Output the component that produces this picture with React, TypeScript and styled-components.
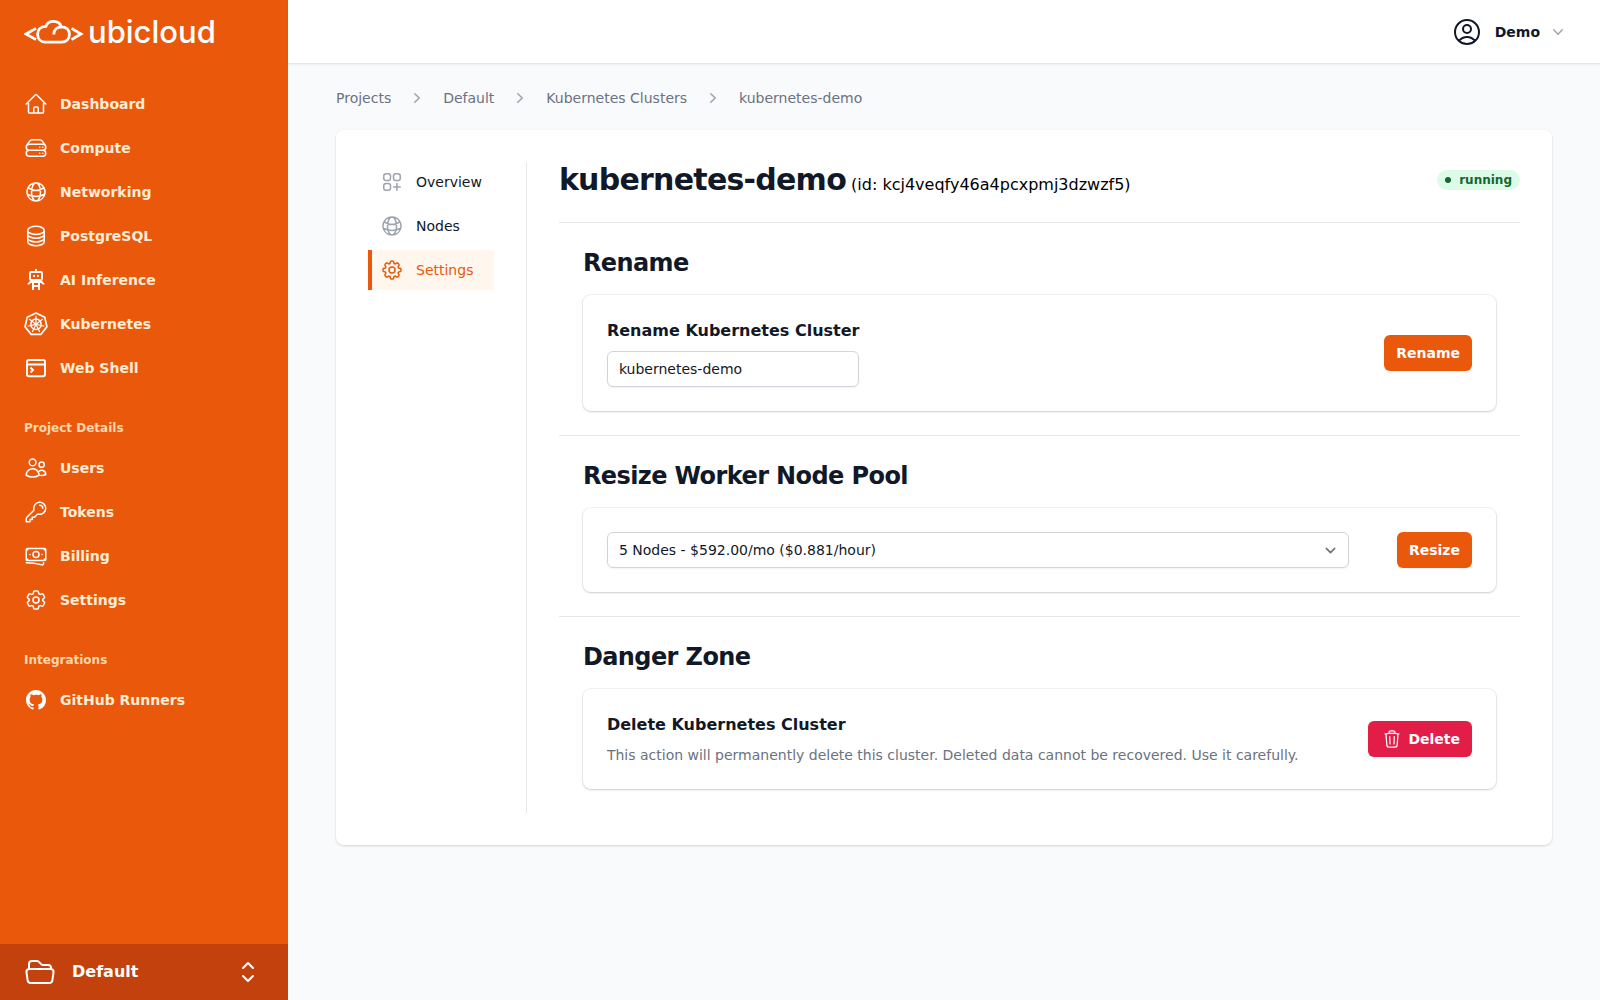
import React from "react";
import styled, { createGlobalStyle } from "styled-components";
import {
  HiOutlineHome, HiOutlineGlobeAlt, HiOutlineCircleStack, HiOutlineUsers, HiOutlineKey,
  HiOutlineBanknotes, HiOutlineCog6Tooth, HiOutlineCog8Tooth, HiOutlineSquaresPlus, HiOutlineFolderOpen,
  HiOutlineChevronUpDown, HiOutlineUserCircle, HiOutlineTrash,
} from "react-icons/hi2";

const Global = createGlobalStyle`
  *, *::before, *::after { box-sizing: border-box; }
  body { margin: 0; background: #f9fafb; color: #000; font-family: "DejaVu Sans", sans-serif; font-size: 16px; line-height: 24px; }
  h1, h2, h3, p, ul, ol { margin: 0; padding: 0; }
  ul, ol { list-style: none; }
  a { color: inherit; text-decoration: none; }
  button, input, select { font: inherit; color: inherit; }
  svg { display: block; flex-shrink: 0; }
`;

const Shell = styled.div`
  display: flex;
  min-height: 100vh;
`;

const Sidebar = styled.aside`
  display: flex;
  flex-direction: column;
  width: 288px;
  flex-shrink: 0;
  background: #ea580c;
`;

const Brand = styled.a`
  display: flex;
  align-items: center;
  gap: 4px;
  height: 64px;
  padding: 0 24px;
  color: #fff;
  font-family: Inter, sans-serif;
  font-size: 31px;
  font-weight: 500;
  line-height: 36px;
`;

const Nav = styled.nav`
  display: flex;
  flex: 1;
  flex-direction: column;
  gap: 28px;
  padding: 20px 16px;
`;

const NavTitle = styled.h2`
  padding: 0 8px;
  margin-bottom: 8px;
  font-size: 12px;
  line-height: 24px;
  font-weight: 600;
  color: #fed7aa;
`;

const NavList = styled.ul`
  display: flex;
  flex-direction: column;
  gap: 4px;
`;

const NavLink = styled.a`
  display: flex;
  align-items: center;
  gap: 12px;
  padding: 8px;
  font-size: 14px;
  line-height: 24px;
  font-weight: 600;
  color: #ffedd5;

  svg { width: 24px; height: 24px; color: #fff; }
`;

const ProjectButton = styled.button`
  display: flex;
  align-items: center;
  gap: 16px;
  height: 56px;
  padding: 0 24px;
  border: 0;
  background: #c2410c;
  color: #fff;
  font-weight: 600;
  text-align: left;

  span { flex: 1; }
`;

const Page = styled.div`
  flex: 1;
  min-width: 0;
`;

const TopBar = styled.header`
  display: flex;
  align-items: center;
  justify-content: flex-end;
  height: 64px;
  padding: 0 32px;
  background: #fff;
  border-bottom: 1px solid #e5e7eb;
  box-shadow: 0 1px 2px rgba(0, 0, 0, 0.05);
`;

const UserButton = styled.button`
  display: flex;
  align-items: center;
  gap: 12px;
  padding: 0;
  border: 0;
  background: none;
  color: #111827;
  font-size: 14px;
  font-weight: 600;
`;

const UserName = styled.span`
  display: flex;
  align-items: center;
  gap: 8px;

  svg { color: #9ca3af; }
`;

const Main = styled.main`
  display: flex;
  flex-direction: column;
  gap: 22px;
  padding: 24px 48px;
`;

const Crumbs = styled.ol`
  display: flex;
  align-items: center;
  gap: 16px;
  font-size: 14px;
  line-height: 20px;
  color: #6b7280;

  li { display: flex; align-items: center; gap: 16px; }
  svg { color: #9ca3af; }
`;

const Panel = styled.div`
  display: flex;
  padding: 32px;
  background: #fff;
  border-radius: 8px;
  box-shadow: 0 1px 3px rgba(0, 0, 0, 0.1), 0 1px 2px rgba(0, 0, 0, 0.06);
`;

const Tabs = styled.nav`
  display: flex;
  flex-direction: column;
  gap: 4px;
  padding-right: 32px;
  border-right: 1px solid #e5e7eb;
`;

const Tab = styled.a<{ $active?: boolean }>`
  display: flex;
  align-items: center;
  gap: 12px;
  padding: 8px 12px 8px 8px;
  border-left: 4px solid ${(p) => (p.$active ? "#ea580c" : "transparent")};
  background: ${(p) => (p.$active ? "#fff7ed" : "transparent")};
  color: ${(p) => (p.$active ? "#ea580c" : "#111827")};
  font-size: 14px;
  line-height: 24px;

  svg { color: ${(p) => (p.$active ? "#ea580c" : "#9ca3af")}; }
`;

const Content = styled.div`
  flex: 1;
  min-width: 0;
  padding-left: 32px;
`;

const Heading = styled.div`
  display: flex;
  align-items: center;
  justify-content: space-between;
  padding-bottom: 24px;
`;

const Title = styled.h1`
  display: inline;
  font-size: 30px;
  line-height: 36px;
  font-weight: 700;
  letter-spacing: -0.025em;
  color: #111827;
`;

const Badge = styled.span`
  display: flex;
  align-items: center;
  gap: 8px;
  padding: 2px 8px;
  border-radius: 10px;
  background: #dcfce7;
  color: #166534;
  font-size: 12px;
  line-height: 16px;
  font-weight: 600;

  &::before { content: ""; width: 6px; height: 6px; border-radius: 3px; background: currentColor; }
`;

const Section = styled.section`
  padding: 24px;
  border-top: 1px solid #e5e7eb;
`;

const SectionTitle = styled.h2`
  margin-bottom: 16px;
  font-size: 24px;
  line-height: 32px;
  font-weight: 700;
  letter-spacing: -0.025em;
  color: #111827;
`;

const Card = styled.form`
  display: flex;
  align-items: center;
  justify-content: space-between;
  gap: 48px;
  padding: 24px;
  border-radius: 8px;
  box-shadow: 0 0 0 1px rgba(17, 24, 39, 0.05), 0 1px 3px rgba(0, 0, 0, 0.1), 0 1px 2px rgba(0, 0, 0, 0.06);
`;

const FieldTitle = styled.label`
  display: block;
  margin-bottom: 8px;
  font-weight: 600;
  color: #111827;
`;

const DeleteTitle = styled.h3`
  margin-bottom: 8px;
  font-size: 16px;
  line-height: 24px;
  font-weight: 600;
  color: #111827;
`;

const Note = styled.p`
  font-size: 14px;
  line-height: 20px;
  color: #6b7280;
`;

const TextInput = styled.input`
  display: block;
  width: 252px;
  height: 36px;
  padding: 5px 11px;
  border: 1px solid #d1d5db;
  border-radius: 6px;
  background: #fff;
  box-shadow: 0 1px 2px rgba(0, 0, 0, 0.05);
  color: #111827;
  font-size: 14px;
  line-height: 24px;
`;

const SelectWrap = styled.div`
  display: grid;
  flex: 1;
  align-items: center;

  > * { grid-area: 1 / 1; }
  svg { justify-self: end; margin-right: 8px; color: #6b7280; pointer-events: none; }
`;

const Select = styled.select`
  width: 100%;
  height: 36px;
  padding: 5px 11px;
  border: 1px solid #d1d5db;
  border-radius: 6px;
  background: #fff;
  box-shadow: 0 1px 2px rgba(0, 0, 0, 0.05);
  appearance: none;
  color: #111827;
  font-size: 14px;
  line-height: 24px;
`;

const Button = styled.button<{ $danger?: boolean }>`
  display: flex;
  align-items: center;
  gap: 6px;
  height: 36px;
  padding: 0 12px;
  border: 0;
  border-radius: 6px;
  background: ${(p) => (p.$danger ? "#e11d48" : "#ea580c")};
  box-shadow: 0 1px 2px rgba(0, 0, 0, 0.05);
  color: #fff;
  font-size: 14px;
  font-weight: 600;

  svg { margin-left: 2px; }
`;

const CloudMark = () => (
  <svg width="60" height="28" viewBox="0 0 60 28" fill="none" stroke="#fff" strokeWidth="2.8" aria-hidden="true">
    <path d="M12 10.400 2 16 12 21.600M47.500 10.400 57 16 47.500 21.600" />
    <path d="M21.500 24.200C16.500 24.200 13.600 20.600 13.600 16.200 13.600 11.600 16.800 8.500 21.800 8.400 23.200 4.800 26 3.400 29.300 3.400 33.300 3.400 36.200 5.200 37.300 8.800 42.200 8.700 45.400 11.700 45.400 16.300 45.400 20.900 42.300 24.200 37.500 24.200Z" />
    <path d="M38 8.800C33 8.800 29.800 11.600 29.800 16.600" />
  </svg>
);

const Server = () => (
  <svg viewBox="0 0 24 24" fill="none" stroke="currentColor" strokeWidth="1.5" strokeLinecap="round" strokeLinejoin="round">
    <path d="M5.25 14.25h13.5m-13.5 0a3 3 0 0 1-3-3m3 3a3 3 0 1 0 0 6h13.5a3 3 0 1 0 0-6m-16.5-3a3 3 0 0 1 3-3h13.5a3 3 0 0 1 3 3m-19.5 0a4.5 4.5 0 0 1 .9-2.7L5.737 5.1a3.375 3.375 0 0 1 2.7-1.35h7.126c1.062 0 2.062.5 2.7 1.35l2.587 3.45a4.5 4.5 0 0 1 .9 2.7m0 0a3 3 0 0 1-3 3m0 3h.008v.008h-.008v-.008Zm0-6h.008v.008h-.008v-.008Zm-3 6h.008v.008h-.008v-.008Zm0-6h.008v.008h-.008v-.008Z" />
  </svg>
);

const Robot = () => (
  <svg viewBox="0 0 24 24" fill="none" stroke="currentColor" strokeWidth="1.9">
    <rect x="6" y="4" width="12" height="8" rx="1" />
    <path d="M12 1v3M9.200 8h1.800M13 8h1.800" />
    <path d="M9 14V22M15 14V22M9 18h6M4.500 16.500V15.800L6.500 14H17.500L19.500 15.800V16.500" />
  </svg>
);

const polar = (r: number, i: number) => {
  const a = (i * 2 * Math.PI) / 7 - Math.PI / 2;
  return `${12 + r * Math.cos(a)} ${12.3 + r * Math.sin(a)}`;
};
const seven = [0, 1, 2, 3, 4, 5, 6];

const Kubernetes = () => (
  <svg viewBox="0 0 24 24" fill="none" stroke="currentColor" strokeLinejoin="round">
    <path strokeWidth="1.700" d={`M${seven.map((i) => polar(11.2, i)).join("L")}Z`} />
    <circle cx="12" cy="12.300" r="5.200" strokeWidth="1.500" />
    <circle cx="12" cy="12.300" r="1.500" fill="currentColor" stroke="none" />
    <path strokeWidth="1.200" d={seven.map((i) => `M${polar(1, i)}L${polar(8.6, i)}`).join("")} />
  </svg>
);

const WebShell = () => (
  <svg viewBox="0 0 24 24" fill="none" stroke="currentColor" strokeWidth="1.900">
    <rect x="3" y="4" width="18" height="16.200" rx="2" />
    <path d="M3 8.500h18M6.500 11.500l2.500 2.500-2.500 2.500" />
  </svg>
);

const GitHub = () => (
  <svg viewBox="-2 -2 24 24" fill="currentColor">
    <path d="M10 0C4.477 0 0 4.484 0 10.017c0 4.425 2.865 8.18 6.839 9.504.5.092.682-.217.682-.483 0-.237-.008-.868-.013-1.703-2.782.605-3.369-1.343-3.369-1.343-.454-1.158-1.11-1.466-1.11-1.466-.908-.62.069-.608.069-.608 1.003.07 1.531 1.032 1.531 1.032.892 1.53 2.341 1.088 2.91.832.092-.647.35-1.088.636-1.338-2.22-.253-4.555-1.113-4.555-4.951 0-1.093.39-1.988 1.029-2.688-.103-.253-.446-1.272.098-2.65 0 0 .84-.27 2.75 1.026A9.564 9.564 0 0110 4.844c.85.004 1.705.115 2.504.337 1.909-1.296 2.747-1.027 2.747-1.027.546 1.379.203 2.398.1 2.651.64.7 1.028 1.595 1.028 2.688 0 3.848-2.339 4.695-4.566 4.942.359.31.678.921.678 1.856 0 1.338-.012 2.419-.012 2.747 0 .268.18.58.688.482A10.019 10.019 0 0020 10.017C20 4.484 15.522 0 10 0z" />
  </svg>
);

const ChevronRight = () => (
  <svg width="20" height="20" viewBox="0 0 20 20" fill="currentColor" aria-hidden="true">
    <path d="M7.21 14.77a.75.75 0 01.02-1.06L11.168 10 7.23 6.29a.75.75 0 111.04-1.08l4.5 4.25a.75.75 0 010 1.08l-4.5 4.25a.75.75 0 01-1.06-.02z" />
  </svg>
);

const ChevronDown = () => (
  <svg width="20" height="20" viewBox="0 0 20 20" fill="currentColor" aria-hidden="true">
    <path d="M5.23 7.21a.75.75 0 011.06.02L10 11.168l3.71-3.938a.75.75 0 111.08 1.04l-4.25 4.5a.75.75 0 01-1.08 0l-4.25-4.5a.75.75 0 01.02-1.06z" />
  </svg>
);

const SelectArrow = () => (
  <svg width="21" height="21" viewBox="0 0 20 20" fill="none" stroke="currentColor" strokeWidth="1.5" strokeLinecap="round" strokeLinejoin="round" aria-hidden="true">
    <path d="M6 8l4 4 4-4" />
  </svg>
);

type Item = { label: string; icon: React.ReactNode };

const groups: { title?: string; items: Item[] }[] = [
  {
    items: [
      { label: "Dashboard", icon: <HiOutlineHome /> },
      { label: "Compute", icon: <Server /> },
      { label: "Networking", icon: <HiOutlineGlobeAlt /> },
      { label: "PostgreSQL", icon: <HiOutlineCircleStack /> },
      { label: "AI Inference", icon: <Robot /> },
      { label: "Kubernetes", icon: <Kubernetes /> },
      { label: "Web Shell", icon: <WebShell /> },
    ],
  },
  {
    title: "Project Details",
    items: [
      { label: "Users", icon: <HiOutlineUsers /> },
      { label: "Tokens", icon: <HiOutlineKey /> },
      { label: "Billing", icon: <HiOutlineBanknotes /> },
      { label: "Settings", icon: <HiOutlineCog6Tooth /> },
    ],
  },
  { title: "Integrations", items: [{ label: "GitHub Runners", icon: <GitHub /> }] },
];

const crumbs = ["Projects", "Default", "Kubernetes Clusters", "kubernetes-demo"];

export default function App() {
  return (
    <Shell>
      <Global />
      <Sidebar>
        <Brand href="#"><CloudMark />ubicloud</Brand>
        <Nav>
          {groups.map((g, i) => (
            <div key={i}>
              {g.title && <NavTitle>{g.title}</NavTitle>}
              <NavList>
                {g.items.map((it) => (
                  <li key={it.label}><NavLink href="#">{it.icon}{it.label}</NavLink></li>
                ))}
              </NavList>
            </div>
          ))}
        </Nav>
        <ProjectButton type="button">
          <HiOutlineFolderOpen size={32} />
          <span>Default</span>
          <HiOutlineChevronUpDown size={32} />
        </ProjectButton>
      </Sidebar>
      <Page>
        <TopBar>
          <UserButton type="button">
            <HiOutlineUserCircle size={32} />
            <UserName>Demo<ChevronDown /></UserName>
          </UserButton>
        </TopBar>
        <Main>
          <nav aria-label="Breadcrumb">
            <Crumbs>
              {crumbs.map((c, i) => (
                <li key={c}>{i > 0 && <ChevronRight />}<a href="#">{c}</a></li>
              ))}
            </Crumbs>
          </nav>
          <Panel>
            <Tabs>
              <Tab href="#"><HiOutlineSquaresPlus size={24} />Overview</Tab>
              <Tab href="#"><HiOutlineGlobeAlt size={24} />Nodes</Tab>
              <Tab href="#" $active><HiOutlineCog8Tooth size={24} />Settings</Tab>
            </Tabs>
            <Content>
              <Heading>
                <div><Title>kubernetes-demo</Title> (id: kcj4veqfy46a4pcxpmj3dzwzf5)</div>
                <Badge>running</Badge>
              </Heading>
              <Section>
                <SectionTitle>Rename</SectionTitle>
                <Card>
                  <div>
                    <FieldTitle htmlFor="name">Rename Kubernetes Cluster</FieldTitle>
                    <TextInput id="name" defaultValue="kubernetes-demo" />
                  </div>
                  <Button type="button">Rename</Button>
                </Card>
              </Section>
              <Section>
                <SectionTitle>Resize Worker Node Pool</SectionTitle>
                <Card>
                  <SelectWrap>
                    <Select aria-label="Worker node count" defaultValue="5">
                      <option value="5">5 Nodes - $592.00/mo ($0.881/hour)</option>
                    </Select>
                    <SelectArrow />
                  </SelectWrap>
                  <Button type="button">Resize</Button>
                </Card>
              </Section>
              <Section>
                <SectionTitle>Danger Zone</SectionTitle>
                <Card>
                  <div>
                    <DeleteTitle>Delete Kubernetes Cluster</DeleteTitle>
                    <Note>This action will permanently delete this cluster. Deleted data cannot be recovered. Use it carefully.</Note>
                  </div>
                  <Button type="button" $danger><HiOutlineTrash size={20} />Delete</Button>
                </Card>
              </Section>
            </Content>
          </Panel>
        </Main>
      </Page>
    </Shell>
  );
}
